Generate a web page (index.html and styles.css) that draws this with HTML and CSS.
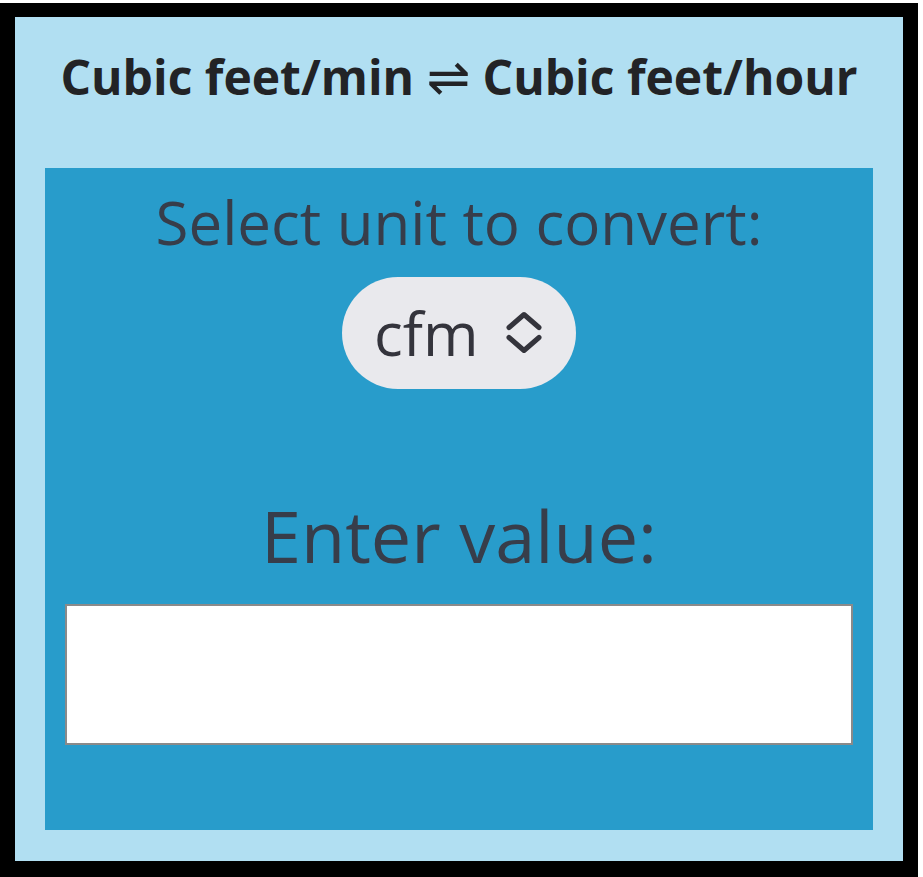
FILE: index.html
```html
<!DOCTYPE html>
<html lang="en">
<head>
<meta charset="utf-8">
<title>Cubic feet/min ⇌ Cubic feet/hour</title>
<link rel="stylesheet" href="styles.css">
</head>
<body>
<div class="frame">
  <h1 class="title">Cubic feet/min <span class="arrows">⇌</span> Cubic feet/hour</h1>
  <main class="panel">
    <label class="label label-select" for="unit">Select unit to convert:</label>
    <div class="select-wrap">
      <select id="unit" class="unit-select">
        <option>cfm</option>
        <option>cfh</option>
      </select>
      <svg class="chevrons" width="38" height="43" viewBox="0 0 38 43" aria-hidden="true">
        <path d="M4 16.5 L19 3.5 L34 16.5" fill="none" stroke="#34343c" stroke-width="5" stroke-linecap="round" stroke-linejoin="round"/>
        <path d="M4 26.5 L19 39.5 L34 26.5" fill="none" stroke="#34343c" stroke-width="5" stroke-linecap="round" stroke-linejoin="round"/>
      </svg>
    </div>
    <label class="label label-value" for="value">Enter value:</label>
    <input id="value" class="value-input" type="text">
  </main>
</div>
</body>
</html>
```

FILE: styles.css
```css
html, body {
  margin: 0;
  padding: 0;
  background: #ffffff;
}

body {
  padding-top: 3px;
  font-family: "Open Sans", "DejaVu Sans", sans-serif;
}

.frame {
  box-sizing: border-box;
  width: 918px;
  height: 874px;
  border-style: solid;
  border-color: #000000;
  border-width: 14px 15px 16px 15px;
  background: #b1dff2;
  padding: 27px 30px 31px;
  display: flex;
  flex-direction: column;
}

.title {
  margin: 0 0 59px;
  height: 65px;
  font-size: 48px;
  line-height: 65px;
  font-weight: 700;
  color: #222326;
  text-align: center;
  white-space: nowrap;
}

.arrows {
  font-family: "DejaVu Sans", sans-serif;
  font-weight: 400;
  font-size: 52px;
  line-height: 0;
}

.panel {
  flex: 1;
  background: #289ccb;
  padding: 15px 20px 0;
  display: flex;
  flex-direction: column;
  align-items: center;
}

.label {
  display: block;
  color: #373d4a;
  font-weight: 400;
  text-align: center;
  white-space: nowrap;
}

.label-select {
  font-size: 60px;
  line-height: 79px;
  margin-bottom: 15px;
}

.label-value {
  font-size: 72px;
  line-height: 95px;
  margin-top: 99px;
  margin-bottom: 21px;
}

.select-wrap {
  position: relative;
  width: 234px;
  height: 112px;
}

.unit-select {
  -webkit-appearance: none;
  appearance: none;
  box-sizing: border-box;
  width: 234px;
  height: 112px;
  border: none;
  border-radius: 56px;
  background: #e9e9ed;
  color: #34343c;
  font-family: "Open Sans", "DejaVu Sans", sans-serif;
  font-size: 60px;
  line-height: 82px;
  padding: 0 0 0 32px;
  margin: 0;
  outline: none;
}

.chevrons {
  position: absolute;
  left: 163px;
  top: 34px;
  pointer-events: none;
}

.value-input {
  box-sizing: border-box;
  width: 788px;
  height: 141px;
  margin: 0;
  border: 2px solid #8a8a8a;
  background: #ffffff;
  font-family: "Open Sans", "DejaVu Sans", sans-serif;
  font-size: 40px;
  padding: 0 12px;
  outline: none;
}
```
